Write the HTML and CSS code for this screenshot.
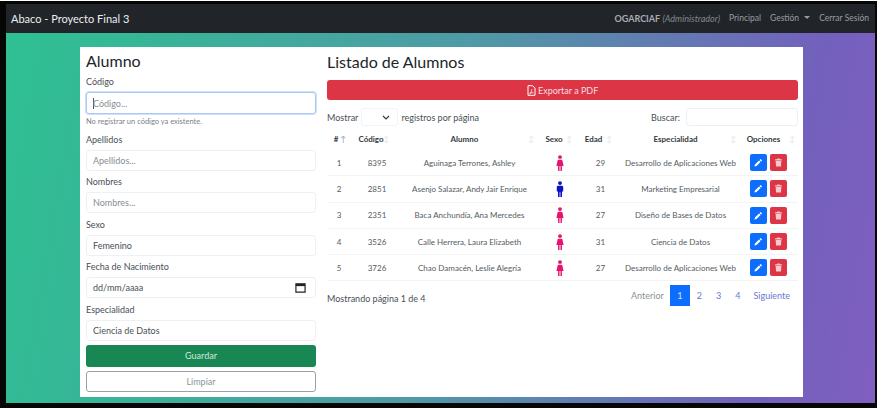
FILE: index.html
```html
<!DOCTYPE html>
<html lang="es">
<head>
    <meta charset="UTF-8">
    <title>Abaco - Proyecto Final 3</title>
    <link rel="stylesheet" href="styles.css">
</head>
<body>
<svg class="defs" width="0" height="0">
    <symbol id="ico-person" viewBox="0 0 10 20">
        <circle cx="5" cy="2.600" r="2.400"/>
        <path d="M3.200 6h3.600q1 0 1.200 1l1.500 6.600H7.400V20H5.600v-6.400h-1.200V20H2.600v-6.400H.5L2 7q.2-1 1.200-1z"/>
    </symbol>
    <symbol id="ico-man" viewBox="0 0 10 20">
        <circle cx="5" cy="2.600" r="2.400"/>
        <path d="M2.800 6h4.400q1.800 0 1.800 1.800V13H7.500v7H5.500v-6h-1v6H2.500v-7H1V7.800Q1 6 2.800 6z"/>
    </symbol>
    <symbol id="ico-pencil" viewBox="0 0 12 12">
        <path d="M8.700 1.200l2.100 2.100-1.300 1.300-2.100-2.100zM6.700 3.200l2.100 2.100-5.400 5.400-2.800.7.700-2.800z"/>
    </symbol>
    <symbol id="ico-trash" viewBox="0 0 12 12">
        <path d="M4.500.8h3l.5 1h2.500v1.400h-9V1.800H4zM2.200 4h7.600l-.5 7.200H2.700z"/>
    </symbol>
</svg>

<div class="frame">
    <nav class="navbar">
        <span class="brand">Abaco - Proyecto Final 3</span>
        <div class="nav-links">
            <span class="user"><b>OGARCIAF</b> <i>(Administrador)</i></span>
            <span>Principal</span>
            <span class="dropdown">Gestión</span>
            <span>Cerrar Sesión</span>
        </div>
    </nav>

    <main class="fondo">
        <div class="card">
            <form class="form-alumno">
                <h2>Alumno</h2>
                <label class="lbl-first">Código</label>
                <input class="campo campo-focus" type="text" placeholder="Código...">
                <small>No registrar un código ya existente.</small>
                <label>Apellidos</label>
                <input class="campo" type="text" placeholder="Apellidos...">
                <label>Nombres</label>
                <input class="campo" type="text" placeholder="Nombres...">
                <label>Sexo</label>
                <input class="campo" type="text" value="Femenino">
                <label>Fecha de Nacimiento</label>
                <div class="campo campo-fecha">
                    <span>dd/mm/aaaa</span>
                    <svg width="11" height="11" viewBox="0 0 12 12"><path d="M1 2h10v9H1z" fill="none" stroke="#212529" stroke-width="1.300"/><path d="M1 2h10v2.500H1z" fill="#212529"/></svg>
                </div>
                <label>Especialidad</label>
                <input class="campo" type="text" value="Ciencia de Datos">
                <button type="button" class="btn-guardar">Guardar</button>
                <button type="button" class="btn-limpiar">Limpiar</button>
            </form>

            <section class="listado">
                <h2>Listado de Alumnos</h2>
                <button type="button" class="btn-pdf">
                    <svg width="9" height="11" viewBox="0 0 9 11"><path d="M1 .7h4.500L8 3.200v7.100H1z" fill="none" stroke="#fff" stroke-width="1"/><path d="M2.500 8.800c1.500-1 2.500-3 2.200-4.500M2.500 8.800c1.500-1 3-1.300 4-1" fill="none" stroke="#fff" stroke-width=".8"/></svg>
                    Exportar a PDF
                </button>

                <div class="controles">
                    <div class="mostrar">
                        Mostrar
                        <span class="select-corto"><svg width="8" height="5" viewBox="0 0 8 5"><path d="M1 1l3 3 3-3" fill="none" stroke="#343a40" stroke-width="1.200"/></svg></span>
                        registros por página
                    </div>
                    <div class="buscar">
                        Buscar:
                        <input type="text">
                    </div>
                </div>

                <table>
                    <thead>
                        <tr>
                            <th class="c-num"># <span class="orden orden-on">↑</span></th>
                            <th class="c-cod">Código <span class="orden">↕</span></th>
                            <th class="c-alu">Alumno <span class="orden">↕</span></th>
                            <th class="c-sex">Sexo <span class="orden orden-sexo">↕</span></th>
                            <th class="c-eda">Edad <span class="orden orden-edad">↕</span></th>
                            <th class="c-esp">Especialidad <span class="orden">↕</span></th>
                            <th class="c-opc">Opciones <span class="orden">↕</span></th>
                        </tr>
                    </thead>
                    <tbody>
                        <tr>
                            <td>1</td><td>8395</td><td>Aguinaga Terrones, Ashley</td>
                            <td><svg class="ico-f"><use href="#ico-person"/></svg></td>
                            <td>29</td><td>Desarrollo de Aplicaciones Web</td>
                            <td><span class="acciones"><span class="btn-ed"><svg><use href="#ico-pencil"/></svg></span><span class="btn-del"><svg><use href="#ico-trash"/></svg></span></span></td>
                        </tr>
                        <tr>
                            <td>2</td><td>2851</td><td>Asenjo Salazar, Andy Jair Enrique</td>
                            <td><svg class="ico-m"><use href="#ico-man"/></svg></td>
                            <td>31</td><td>Marketing Empresarial</td>
                            <td><span class="acciones"><span class="btn-ed"><svg><use href="#ico-pencil"/></svg></span><span class="btn-del"><svg><use href="#ico-trash"/></svg></span></span></td>
                        </tr>
                        <tr>
                            <td>3</td><td>2351</td><td>Baca Anchundía, Ana Mercedes</td>
                            <td><svg class="ico-f"><use href="#ico-person"/></svg></td>
                            <td>27</td><td>Diseño de Bases de Datos</td>
                            <td><span class="acciones"><span class="btn-ed"><svg><use href="#ico-pencil"/></svg></span><span class="btn-del"><svg><use href="#ico-trash"/></svg></span></span></td>
                        </tr>
                        <tr>
                            <td>4</td><td>3526</td><td>Calle Herrera, Laura Elizabeth</td>
                            <td><svg class="ico-f"><use href="#ico-person"/></svg></td>
                            <td>31</td><td>Ciencia de Datos</td>
                            <td><span class="acciones"><span class="btn-ed"><svg><use href="#ico-pencil"/></svg></span><span class="btn-del"><svg><use href="#ico-trash"/></svg></span></span></td>
                        </tr>
                        <tr>
                            <td>5</td><td>3726</td><td>Chao Damacén, Leslie Alegría</td>
                            <td><svg class="ico-f"><use href="#ico-person"/></svg></td>
                            <td>27</td><td>Desarrollo de Aplicaciones Web</td>
                            <td><span class="acciones"><span class="btn-ed"><svg><use href="#ico-pencil"/></svg></span><span class="btn-del"><svg><use href="#ico-trash"/></svg></span></span></td>
                        </tr>
                    </tbody>
                </table>

                <div class="pie-tabla">
                    <span class="pie-info">Mostrando página 1 de 4</span>
                    <div class="paginas">
                        <span class="pag pag-off">Anterior</span>
                        <span class="pag pag-on">1</span>
                        <span class="pag pag-num">2</span>
                        <span class="pag pag-num">3</span>
                        <span class="pag pag-num">4</span>
                        <span class="pag">Siguiente</span>
                    </div>
                </div>
            </section>
        </div>
    </main>
</div>
</body>
</html>
```

FILE: styles.css
```css
html, body {
    margin: 0;
    height: 408px;
    overflow: hidden;
    background: #fff;
    font-family: Lato, Arial, sans-serif;
    color: #495057;
}
.defs {
    position: absolute;
}
.frame {
    box-sizing: border-box;
    width: 877px;
    height: 407px;
    margin-top: 1px;
    border-style: solid;
    border-color: #060606;
    border-width: 3px 2px 5px 6px;
    display: flex;
    flex-direction: column;
}
.navbar {
    height: 29px;
    flex: none;
    background: #212529;
    display: flex;
    align-items: center;
    justify-content: space-between;
    padding: 0 6px 0 5px;
}
.brand {
    color: #eceef0;
    font-size: 11px;
}
.nav-links {
    display: flex;
    gap: 9px;
    font-size: 8.500px;
    color: #9a9da0;
}
.user {
    font-size: 9px;
}
.user b {
    color: #a9acaf;
}
.user i {
    color: #83878b;
}
.dropdown::after {
    content: "";
    display: inline-block;
    margin-left: 5px;
    vertical-align: 2px;
    border-top: 3px solid #9a9da0;
    border-left: 3px solid transparent;
    border-right: 3px solid transparent;
}
.fondo {
    flex: 1;
    background: linear-gradient(100deg, #2fc093 0%, #35b896 12%, #4f9aa6 50%, #7360bd 88%, #805fc0 100%);
    padding: 14px 72px 6px 74px;
    display: flex;
}
.card {
    flex: 1;
    background: #fff;
    display: flex;
    padding: 0 5px 0 6px;
    gap: 11px;
}
h2 {
    margin: 0;
    font-size: 16px;
    font-weight: 400;
    line-height: 24px;
    color: #212529;
}
.form-alumno {
    width: 230px;
    flex: none;
    display: flex;
    flex-direction: column;
    padding-top: 2px;
}
label {
    font-size: 9px;
    line-height: 11px;
    margin: 5.500px 0 5px;
    color: #495057;
}
.lbl-first {
    margin: 3px 0 5px;
}
.campo {
    box-sizing: border-box;
    height: 21px;
    flex: none;
    width: 100%;
    margin: 0;
    padding: 0 6px;
    border: 1px solid #eef0f2;
    border-radius: 3px;
    font: 9px Lato, Arial, sans-serif;
    color: #495057;
    background: #fff;
}
.campo::placeholder {
    color: #868e96;
}
.campo-focus {
    height: 22px;
    border-color: #a9c8f6;
    box-shadow: 0 0 0 1px #cfe0fb;
    background: linear-gradient(#555, #555) no-repeat 6px 50% / 1px 11px;
}
.campo-fecha {
    display: flex;
    align-items: center;
    justify-content: space-between;
    padding-right: 9px;
}
small {
    font-size: 7.500px;
    line-height: 11px;
    margin-top: 2px;
    margin-bottom: 1px;
    color: #7b8287;
}
.btn-guardar,
.btn-limpiar {
    box-sizing: border-box;
    height: 22px;
    flex: none;
    font: 9px Lato, Arial, sans-serif;
    border-radius: 3px;
}
.btn-guardar {
    margin-top: 4px;
    background: #198754;
    border: none;
    color: #cfe8dc;
}
.btn-limpiar {
    margin-top: 4px;
    height: 21px;
    background: #fff;
    border: 1px solid #9aa0a5;
    color: #8d9398;
}
.listado {
    flex: 1;
    min-width: 0;
    display: flex;
    flex-direction: column;
}
.listado h2 {
    padding-top: 3px;
}
.btn-pdf {
    height: 20px;
    flex: none;
    margin-top: 6px;
    background: #dc3545;
    border: none;
    border-radius: 3px;
    color: #f8dfe2;
    font: 9px Lato, Arial, sans-serif;
}
.btn-pdf svg {
    vertical-align: -2px;
}
.controles {
    display: flex;
    justify-content: space-between;
    align-items: center;
    margin-top: 8px;
    font-size: 9px;
    height: 18px;
}
.mostrar,
.buscar {
    display: flex;
    align-items: center;
    gap: 3px;
}
.buscar {
    gap: 6px;
}
.select-corto {
    box-sizing: border-box;
    width: 37px;
    height: 18px;
    border: 1px solid #f1f3f5;
    border-radius: 3px;
    display: flex;
    align-items: center;
    justify-content: flex-end;
    padding-right: 7px;
}
.buscar input {
    box-sizing: border-box;
    width: 112px;
    height: 18px;
    border: 1px solid #eef0f2;
    border-radius: 3px;
}
table {
    width: 100%;
    margin-top: 2px;
    border-collapse: collapse;
    table-layout: fixed;
    font-size: 8px;
    text-align: center;
}
th {
    position: relative;
    height: 22px;
    padding: 0;
    font-weight: 700;
    color: #343a40;
    white-space: nowrap;
}
td {
    height: 25.300px;
    padding: 0;
    border-bottom: 1px solid #f1f3f5;
    color: #555c62;
    white-space: nowrap;
}
.orden {
    position: absolute;
    right: 3px;
    top: 6px;
    color: #e6e8ea;
    font-weight: 400;
}
.orden-on {
    right: 5px;
    color: #9a9fa4;
}
.orden-sexo {
    right: 5px;
}
.orden-edad {
    right: -2px;
}
.c-num { width: 24px; padding-right: 6px; box-sizing: border-box; }
.c-cod { width: 41px; padding-right: 1px; box-sizing: border-box; }
.c-alu { width: 145px; }
.c-sex { width: 40px; padding-right: 6px; box-sizing: border-box; }
.c-eda { width: 33px; }
.c-esp { width: 129px; padding-left: 2px; box-sizing: border-box; }
.c-opc { padding-right: 10px; box-sizing: border-box; }
td:nth-child(2) { padding-left: 11px; }
td:nth-child(3) { padding-left: 10px; }
td:nth-child(4) { padding-left: 6px; }
td:nth-child(5) { padding-left: 14px; }
td:nth-child(6) { padding-left: 12px; }
.ico-f,
.ico-m {
    width: 8px;
    height: 16px;
    vertical-align: middle;
}
.ico-f {
    fill: #e6136f;
}
.ico-m {
    fill: #0a13c8;
}
.acciones {
    display: inline-flex;
    gap: 3px;
    vertical-align: middle;
}
.btn-ed,
.btn-del {
    width: 17px;
    height: 17px;
    border-radius: 2px;
    display: flex;
    align-items: center;
    justify-content: center;
}
.btn-ed {
    background: #0d6efd;
}
.btn-del {
    background: #dc3545;
}
.acciones svg {
    width: 9px;
    height: 9px;
    fill: #fff;
}
.btn-del svg {
    fill: #f6c9ce;
}
.pie-tabla {
    display: flex;
    justify-content: space-between;
    align-items: flex-start;
    margin-top: 4px;
    font-size: 9px;
}
.pie-info {
    margin-top: 8px;
}
.paginas {
    display: flex;
    height: 21px;
    margin-right: 2px;
}
.pag {
    padding: 0 6px;
    display: flex;
    align-items: center;
    color: #6a78d0;
}
.pag-num {
    padding: 0 7px;
}
.pag-off {
    color: #8b9196;
}
.pag-on {
    width: 20px;
    padding: 0;
    justify-content: center;
    background: #0d6efd;
    color: #cfe2ff;
}
```
